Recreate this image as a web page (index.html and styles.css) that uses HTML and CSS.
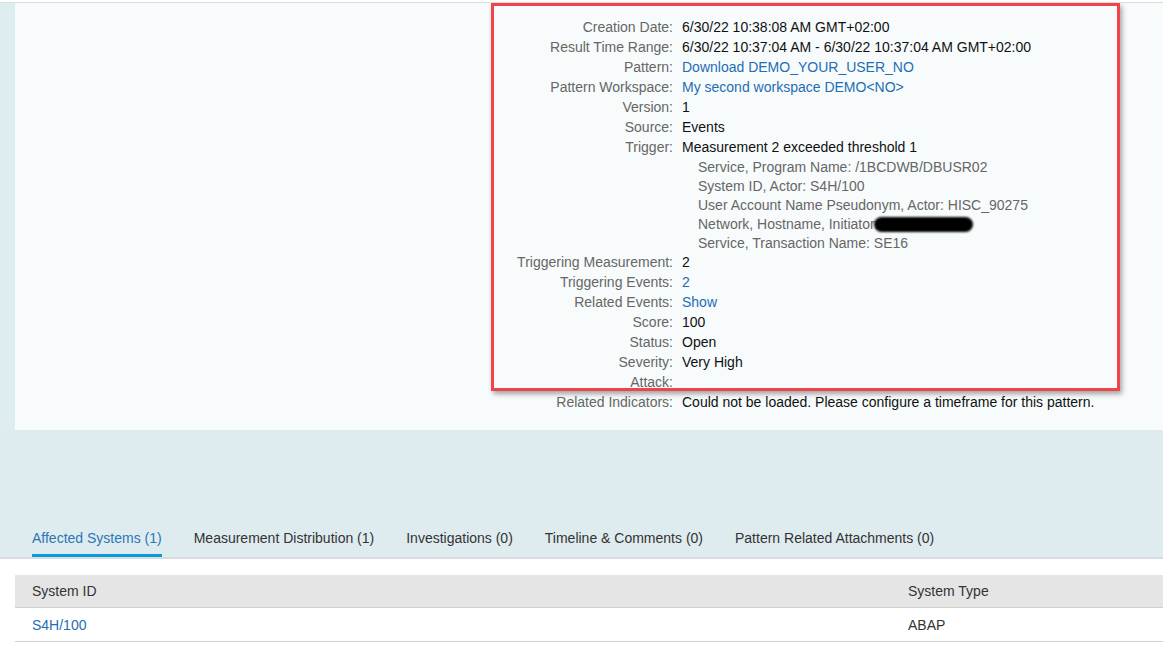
FILE: index.html
```html
<!DOCTYPE html>
<html lang="en">
<head>
<meta charset="utf-8">
<title>Alert Details</title>
<link rel="stylesheet" href="styles.css">
</head>
<body>
<div class="topline"></div>
<div class="page">
  <div class="panel">
    <div class="details">
      <div class="lbl">Creation Date:</div><div class="val">6/30/22 10:38:08 AM GMT+02:00</div>
      <div class="lbl">Result Time Range:</div><div class="val">6/30/22 10:37:04 AM - 6/30/22 10:37:04 AM GMT+02:00</div>
      <div class="lbl">Pattern:</div><div class="val link">Download DEMO_YOUR_USER_NO</div>
      <div class="lbl">Pattern Workspace:</div><div class="val link">My second workspace DEMO&lt;NO&gt;</div>
      <div class="lbl">Version:</div><div class="val">1</div>
      <div class="lbl">Source:</div><div class="val">Events</div>
      <div class="lbl">Trigger:</div>
      <div class="val">
        <div>Measurement 2 exceeded threshold 1</div>
        <div class="sub">
          <div>Service, Program Name: /1BCDWB/DBUSR02</div>
          <div>System ID, Actor: S4H/100</div>
          <div>User Account Name Pseudonym, Actor: HISC_90275</div>
          <div>Network, Hostname, Initiator:<span class="redact"></span></div>
          <div>Service, Transaction Name: SE16</div>
        </div>
      </div>
      <div class="lbl">Triggering Measurement:</div><div class="val">2</div>
      <div class="lbl">Triggering Events:</div><div class="val link">2</div>
      <div class="lbl">Related Events:</div><div class="val link">Show</div>
      <div class="lbl">Score:</div><div class="val">100</div>
      <div class="lbl">Status:</div><div class="val">Open</div>
      <div class="lbl">Severity:</div><div class="val">Very High</div>
      <div class="lbl">Attack:</div><div class="val"></div>
      <div class="lbl">Related Indicators:</div><div class="val">Could not be loaded. Please configure a timeframe for this pattern.</div>
    </div>
    <div class="highlight"></div>
  </div>
  <div class="band">
    <div class="tabs">
      <div class="tab active">Affected Systems (1)</div>
      <div class="tab">Measurement Distribution (1)</div>
      <div class="tab">Investigations (0)</div>
      <div class="tab">Timeline &amp; Comments (0)</div>
      <div class="tab">Pattern Related Attachments (0)</div>
    </div>
  </div>
  <div class="content">
    <div class="table">
      <div class="row head">
        <div class="cell">System ID</div>
        <div class="cell">System Type</div>
      </div>
      <div class="row">
        <div class="cell link">S4H/100</div>
        <div class="cell">ABAP</div>
      </div>
    </div>
  </div>
</div>
</body>
</html>
```
FILE: styles.css
```css
* { box-sizing: border-box; }
html, body {
  margin: 0;
  padding: 0;
  background: #ffffff;
  font-family: "Liberation Sans", Arial, sans-serif;
  font-size: 14px;
  color: #1a1a1a;
}
.topline {
  height: 3px;
  background: #ffffff;
  border-bottom: 1px solid #dcdcdc;
}
.page {
  width: 1163px;
  overflow: hidden;
}
.panel {
  position: relative;
  margin-left: 15px;
  background: #f7fbfc;
  padding: 14px 0 18px 0;
  box-shadow: -15px 0 0 0 #ddedf0;
}
.details {
  display: grid;
  grid-template-columns: 658px 1fr;
  column-gap: 9px;
  line-height: 20px;
}
.lbl {
  text-align: right;
  color: #666666;
  white-space: nowrap;
}
.val {
  color: #111111;
  white-space: nowrap;
  min-height: 20px;
}
.link { color: #1f6db3; }
.sub {
  padding-left: 16px;
  padding-top: 1px;
  margin-bottom: -1px;
  line-height: 19px;
  color: #666666;
}
.redact {
  display: inline-block;
  width: 99px;
  height: 15px;
  margin-left: -5px;
  vertical-align: -3px;
  background: #000;
  border-radius: 8px;
  filter: blur(0.8px);
}
.highlight {
  position: absolute;
  left: 476px;
  top: 0;
  width: 629px;
  height: 388px;
  border: 3px solid #f0444a;
  box-shadow: 2px 3px 5px rgba(0, 0, 0, 0.35);
  pointer-events: none;
}
.band {
  background: #deebef;
  padding-top: 98px;
  border-bottom: 2px solid #d9dcde;
}
.tabs {
  display: flex;
  gap: 32px;
  padding-left: 32px;
}
.tab {
  line-height: 20px;
  padding-bottom: 6px;
  border-bottom: 3px solid transparent;
  color: #333333;
  white-space: nowrap;
}
.tab.active {
  color: #2b76b6;
  border-bottom-color: #0a9ad8;
}
.content {
  padding: 16px 0 20px 15px;
}
.table {
  display: flex;
  flex-direction: column;
}
.row {
  display: grid;
  grid-template-columns: 876px 1fr;
  border-bottom: 1px solid #d0d0d0;
  height: 34px;
  align-items: center;
}
.row.head {
  background: #e5e5e5;
  height: 33px;
}
.cell {
  padding-left: 17px;
  color: #333333;
}
.cell.link { color: #1f6db3; }
```
